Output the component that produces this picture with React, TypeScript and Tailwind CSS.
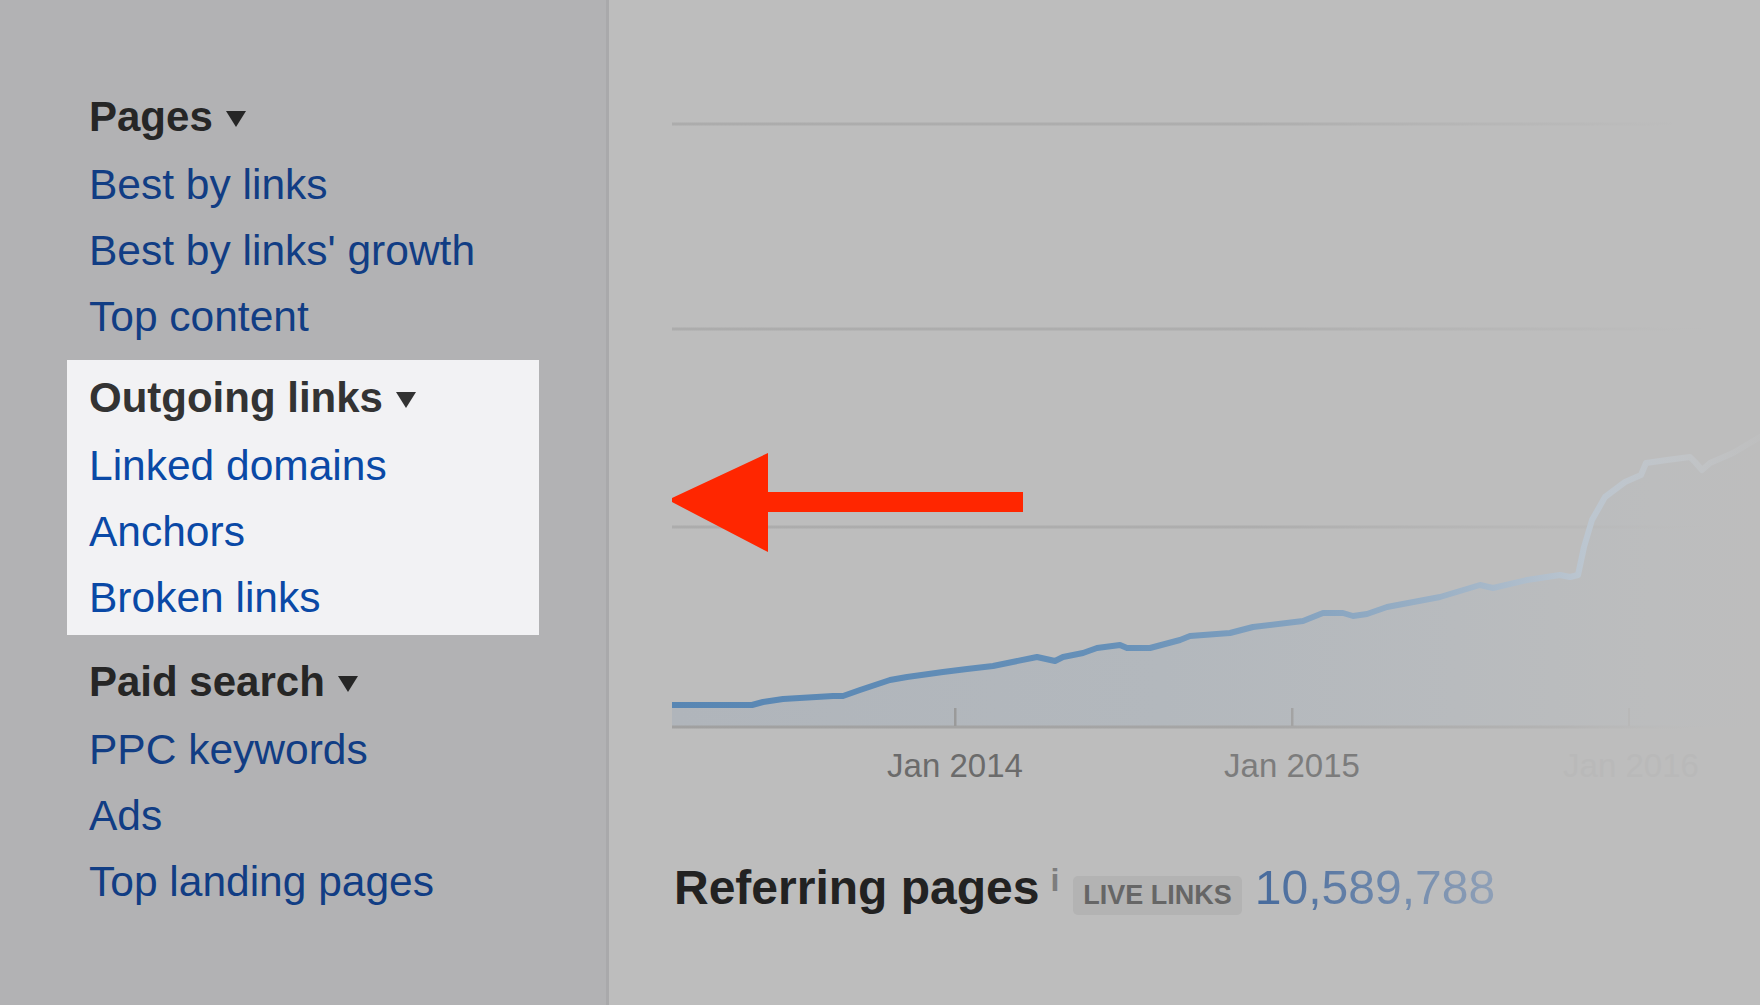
import React from 'react';

const linePoints: [number, number][] = [
  [672, 705], [752, 705], [763, 702], [783, 699], [833, 696], [843, 696], [860, 690], [890, 680],
  [907, 677], [943, 672], [967, 669], [993, 666], [1037, 657], [1055, 661], [1063, 657], [1083, 653],
  [1097, 648], [1120, 645], [1127, 648], [1150, 648], [1180, 640], [1190, 636], [1230, 633], [1253, 627],
  [1303, 621], [1323, 613], [1343, 613], [1353, 616], [1367, 614], [1387, 607], [1440, 597], [1480, 585],
  [1493, 588], [1527, 580], [1560, 575], [1570, 577], [1578, 575], [1584, 547], [1592, 520], [1605, 497],
  [1625, 482], [1641, 475], [1646, 463], [1667, 460], [1690, 457], [1695, 462], [1702, 470], [1710, 463],
  [1733, 453], [1760, 437],
];

const linePath = linePoints.map(([x, y], i) => `${i === 0 ? 'M' : 'L'}${x} ${y}`).join(' ');
const areaPath = `${linePath} L1760 727 L672 727 Z`;

function Caret() {
  return (
    <svg width="20" height="16" viewBox="0 0 20 16" className="ml-[13px] inline-block align-[4px]">
      <polygon points="0,0 20,0 10,16" fill="currentColor" />
    </svg>
  );
}

function Heading({ label, inBox = false }: { label: string; inBox?: boolean }) {
  return (
    <div className={`h-[68px] text-[42px] font-bold leading-[66px] whitespace-nowrap ${inBox ? 'text-[#333333]' : 'text-[#262626]'}`}>
      {label}
      <Caret />
    </div>
  );
}

function NavLink({ label, inBox = false }: { label: string; inBox?: boolean }) {
  return (
    <div className={`h-[66px] text-[42.5px] leading-[66px] whitespace-nowrap ${inBox ? 'text-[#0a49a6]' : 'text-[#113d84]'}`}>
      {label}
    </div>
  );
}

function Chart() {
  return (
    <svg width="1088" height="800" viewBox="672 0 1088 800" className="block">
      <defs>
        <linearGradient id="grid" gradientUnits="userSpaceOnUse" x1="672" y1="0" x2="1730" y2="0">
          <stop offset="0" stopColor="#acacac" stopOpacity="1" />
          <stop offset="0.55" stopColor="#acacac" stopOpacity="0.9" />
          <stop offset="0.85" stopColor="#b4b4b4" stopOpacity="0.45" />
          <stop offset="1" stopColor="#bdbdbd" stopOpacity="0" />
        </linearGradient>
        <linearGradient id="axis" gradientUnits="userSpaceOnUse" x1="672" y1="0" x2="1720" y2="0">
          <stop offset="0" stopColor="#a0a0a0" />
          <stop offset="0.55" stopColor="#a6a6a6" />
          <stop offset="0.85" stopColor="#b4b4b4" />
          <stop offset="1" stopColor="#bdbdbd" stopOpacity="0" />
        </linearGradient>
        <linearGradient id="stroke" gradientUnits="userSpaceOnUse" x1="672" y1="0" x2="1760" y2="0">
          <stop offset="0" stopColor="#5886b3" />
          <stop offset="0.4" stopColor="#6690b8" />
          <stop offset="0.7" stopColor="#9ab0c5" />
          <stop offset="0.84" stopColor="#bcc6d0" />
          <stop offset="0.93" stopColor="#c4c9ce" stopOpacity="0.6" />
          <stop offset="1" stopColor="#c6c9cc" stopOpacity="0.15" />
        </linearGradient>
        <linearGradient id="area" gradientUnits="userSpaceOnUse" x1="672" y1="0" x2="1760" y2="0">
          <stop offset="0" stopColor="#b0b5bb" />
          <stop offset="0.45" stopColor="#b3b8bd" />
          <stop offset="0.72" stopColor="#b8bbbe" />
          <stop offset="0.9" stopColor="#bcbdbe" />
          <stop offset="1" stopColor="#bdbdbd" />
        </linearGradient>
      </defs>

      {/* grid */}
      <rect x="672" y="122.5" width="1000" height="3" fill="url(#grid)" />
      <rect x="672" y="327.5" width="1030" height="3" fill="url(#grid)" />

      {/* area + line */}
      <path d={areaPath} fill="url(#area)" />
      <rect x="672" y="525.5" width="1058" height="3" fill="url(#grid)" />
      <path d={linePath} fill="none" stroke="url(#stroke)" strokeWidth="6" strokeLinejoin="round" strokeLinecap="round" />

      {/* axis */}
      <rect x="672" y="725.5" width="1048" height="3" fill="url(#axis)" />
      <rect x="954" y="708" width="2.5" height="18" fill="#9a9a9a" />
      <rect x="1291" y="708" width="2.5" height="18" fill="#a3a3a3" />
      <rect x="1628" y="708" width="2" height="18" fill="#b8b8b8" />

      <g fontSize="33" textAnchor="middle">
        <text x="955" y="777" fill="#6b6b6b">Jan 2014</text>
        <text x="1292" y="777" fill="#7c7c7c">Jan 2015</text>
        <text x="1631" y="777" fill="#b9b9b9">Jan 2016</text>
      </g>

      {/* arrow */}
      <polygon
        points="668,500 768,453 768,492 1023,492 1023,512 768,512 768,552"
        fill="#ff2600"
      />
    </svg>
  );
}

export default function App() {
  return (
    <div className="flex h-[1005px] w-[1760px] overflow-hidden font-['Liberation_Sans',Arial,sans-serif]">
      {/* Sidebar */}
      <aside className="w-[609px] shrink-0 border-r-[3px] border-[#a9a9ab] bg-[#b2b2b4] pl-[67px] pt-[84px]">
        <div className="pl-[22px]">
          <Heading label="Pages" />
          <NavLink label="Best by links" />
          <NavLink label="Best by links' growth" />
          <NavLink label="Top content" />
        </div>
        <div className="mt-[10px] w-[472px] bg-[#f2f2f4] pb-[4px] pl-[22px] pt-[5px]">
          <Heading label="Outgoing links" inBox />
          <NavLink label="Linked domains" inBox />
          <NavLink label="Anchors" inBox />
          <NavLink label="Broken links" inBox />
        </div>
        <div className="mt-[14px] pl-[22px]">
          <Heading label="Paid search" />
          <NavLink label="PPC keywords" />
          <NavLink label="Ads" />
          <NavLink label="Top landing pages" />
        </div>
      </aside>

      {/* Main */}
      <main className="flex-1 bg-[#bdbdbd] pl-[63px]">
        <Chart />
        <div className="ml-[2px] mt-[64px] flex items-baseline leading-[48px] whitespace-nowrap">
          <span className="text-[48px] font-bold text-[#222222]">Referring pages</span>
          <span className="relative -top-[13px] ml-[11px] text-[32px] font-bold text-[#7d7d7d]">i</span>
          <span className="ml-[14px] h-[39px] rounded-[5px] bg-[#b3b3b3] px-[10px] text-[27px] font-bold leading-[39px] text-[#666666]">
            LIVE LINKS
          </span>
          <span className="ml-[13px] bg-linear-to-r from-[#466a9c] to-[#8fa0b7] bg-clip-text text-[48px] text-transparent">
            10,589,788
          </span>
        </div>
      </main>
    </div>
  );
}
